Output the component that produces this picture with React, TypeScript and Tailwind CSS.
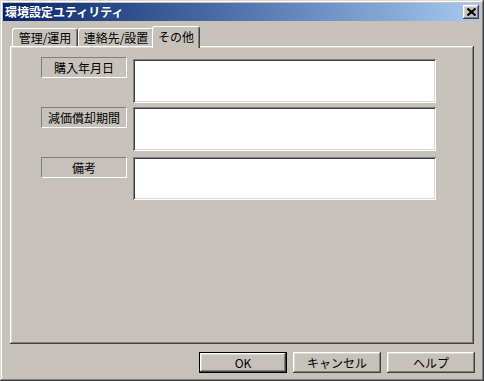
// App.tsx — 環境設定ユーティリティ dialog (classic Windows look)

const raised =
  "shadow-[inset_-1px_-1px_0_#404040,inset_1px_1px_0_#ffffff,inset_-2px_-2px_0_#808080,inset_2px_2px_0_#dcd9d2]";
const frame =
  "shadow-[inset_-1px_-1px_0_#404040,inset_1px_1px_0_#dcd9d2,inset_-2px_-2px_0_#808080,inset_2px_2px_0_#ffffff]";
const sunken =
  "shadow-[inset_1px_1px_0_#808080,inset_-1px_-1px_0_#ffffff,inset_2px_2px_0_#404040,inset_-2px_-2px_0_#dcd9d2]";

function TitleBar() {
  return (
    <div className="h-[18px] flex items-center pl-[2px] pr-[2px] bg-linear-to-r from-[#0a246a] to-[#a6caf0]">
      <span className="text-white font-bold text-[12px] leading-none">環境設定ユティリティ</span>
      <button className={`ml-auto w-[16px] h-[14px] bg-[#c6c2bb] grid place-items-center ${raised}`}>
        <svg width="9" height="8" viewBox="0 0 9 8">
          <path d="M0.5 0.5 L8.5 7.5 M8.5 0.5 L0.5 7.5" stroke="#000" strokeWidth="2" />
        </svg>
      </button>
    </div>
  );
}

function Tab({ label, w, active }: { label: string; w: string; active?: boolean }) {
  if (active) {
    return (
      <div
        className={`relative z-10 -ml-[2px] -mb-[2px] h-[22px] ${w} pb-[2px] flex items-center justify-center bg-[#c6c2bb] border-l border-t border-white border-r border-r-[#404040] rounded-t-[3px] shadow-[inset_-1px_0_0_#808080]`}
      >
        {label}
      </div>
    );
  }
  return (
    <div
      className={`h-[18px] ${w} flex items-center justify-center bg-[#c6c2bb] border-l border-t border-white border-r border-r-[#404040] rounded-t-[3px] shadow-[inset_-1px_0_0_#808080]`}
    >
      {label}
    </div>
  );
}

function Field({
  label,
  h,
  className,
  boxClass,
}: {
  label: string;
  h: string;
  className?: string;
  boxClass?: string;
}) {
  return (
    <div className={`flex items-start ${className ?? ""}`}>
      <div className="w-[86px] h-[21px] flex items-center justify-center border border-t-[#808080] border-l-[#808080] border-r-white border-b-white">
        {label}
      </div>
      <div className={`ml-[6px] w-[303px] bg-white ${h} ${boxClass ?? ""} ${sunken}`} />
    </div>
  );
}

export default function App() {
  return (
    <div
      className={`w-[484px] h-[381px] bg-[#c6c2bb] p-[3px] flex flex-col font-['Noto_Sans_CJK_JP',sans-serif] text-[12px] leading-none text-black ${frame}`}
    >
      <TitleBar />

      <div className="mt-[5px] ml-[7px] flex items-end h-[20px] pl-[2px]">
        <Tab label="管理/運用" w="w-[66px]" />
        <Tab label="連絡先/設置" w="w-[76px]" />
        <Tab label="その他" w="w-[48px]" active />
      </div>

      <div className={`ml-[7px] w-[464px] h-[298px] pt-[11px] pl-[31px] flex flex-col ${raised}`}>
        <Field label="購入年月日" h="h-[44px]" boxClass="mt-[2px]" />
        <Field label="減価償却期間" h="h-[44px]" className="mt-[4px]" />
        <Field label="備考" h="h-[43px]" className="mt-[6px]" />
      </div>

      <div className="mt-[8px] flex justify-end gap-[6px] pr-[6px]">
        <button className={`w-[88px] h-[21px] border border-black ${raised}`}>OK</button>
        <button className={`w-[88px] h-[21px] ${raised}`}>キャンセル</button>
        <button className={`w-[88px] h-[21px] ${raised}`}>ヘルプ</button>
      </div>
    </div>
  );
}
